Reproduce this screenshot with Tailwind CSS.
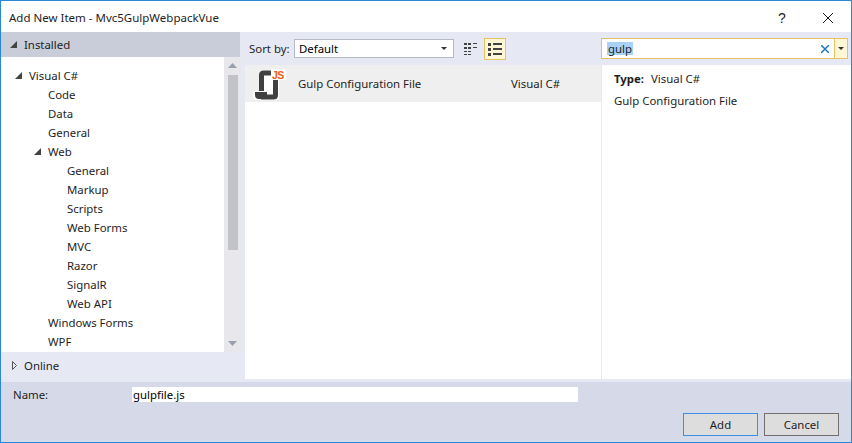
<!DOCTYPE html>
<html lang="en">
<head>
    <meta charset="UTF-8">
    <title>Add New Item</title>
    <script src="https://cdn.jsdelivr.net/npm/@tailwindcss/browser@4"></script>
</head>
<body class="bg-white">
    <div class="w-[852px] h-[443px] border border-[#2b87d8] flex flex-col overflow-hidden font-['Noto_Sans',sans-serif] text-[11.4px] text-[#1e1e1e] leading-[16px]">
        <!-- title bar -->
        <div class="h-[31px] shrink-0 bg-white flex items-center pl-[8px] pt-[2px]">
            <span class="flex-1 text-[11.5px]">Add New Item - Mvc5GulpWebpackVue</span>
            <span class="w-[10px] text-[14px] text-center mr-[36px] font-['Liberation_Sans',sans-serif]">?</span>
            <svg class="w-[10px] h-[10px] mr-[18px]" viewBox="0 0 10 10"><path d="M0 0L10 10M10 0L0 10" stroke="#1e1e1e" stroke-width="1" fill="none"/></svg>
        </div>

        <div class="flex-1 flex min-h-0 bg-[#e6e9f4]">
            <!-- left column -->
            <div class="w-[244px] shrink-0 flex flex-col">
                <div class="w-[239px] h-[25px] bg-[#c9cdd9] flex items-center shrink-0">
                    <svg class="w-[7px] h-[7px] ml-[9px] mr-[7px]" viewBox="0 0 7 7"><path d="M7 0V7H0Z" fill="#444"/></svg>
                    <span>Installed</span>
                </div>
                <div class="w-[240px] h-[295px] shrink-0 bg-white flex">
                    <div class="flex-1 pt-[9px]">
                        <div class="h-[19px] flex items-center pl-[14px]">
                            <svg class="w-[7px] h-[7px] mr-[7px]" viewBox="0 0 7 7"><path d="M7 0V7H0Z" fill="#444"/></svg>
                            <span>Visual C#</span>
                        </div>
                        <div class="h-[19px] flex items-center pl-[47px]">Code</div>
                        <div class="h-[19px] flex items-center pl-[47px]">Data</div>
                        <div class="h-[19px] flex items-center pl-[47px]">General</div>
                        <div class="h-[19px] flex items-center pl-[33px]">
                            <svg class="w-[7px] h-[7px] mr-[7px]" viewBox="0 0 7 7"><path d="M7 0V7H0Z" fill="#444"/></svg>
                            <span>Web</span>
                        </div>
                        <div class="h-[19px] flex items-center pl-[66px]">General</div>
                        <div class="h-[19px] flex items-center pl-[66px]">Markup</div>
                        <div class="h-[19px] flex items-center pl-[66px]">Scripts</div>
                        <div class="h-[19px] flex items-center pl-[66px]">Web Forms</div>
                        <div class="h-[19px] flex items-center pl-[66px]">MVC</div>
                        <div class="h-[19px] flex items-center pl-[66px]">Razor</div>
                        <div class="h-[19px] flex items-center pl-[66px]">SignalR</div>
                        <div class="h-[19px] flex items-center pl-[66px]">Web API</div>
                        <div class="h-[19px] flex items-center pl-[47px]">Windows Forms</div>
                        <div class="h-[19px] flex items-center pl-[47px]">WPF</div>
                    </div>
                    <!-- tree scrollbar -->
                    <div class="w-[17px] bg-[#e8e8ec] flex flex-col items-center">
                        <svg class="w-[9px] h-[5px] mt-[6px] mb-[7px]" viewBox="0 0 9 5"><path d="M4.500 0L9 5H0Z" fill="#9a9fae"/></svg>
                        <div class="w-[10px] h-[175px] bg-[#c2c3c9]"></div>
                        <div class="flex-1"></div>
                        <svg class="w-[9px] h-[5px] mb-[6px]" viewBox="0 0 9 5"><path d="M4.500 5L9 0H0Z" fill="#9a9fae"/></svg>
                    </div>
                </div>
                <div class="flex-1 flex items-center">
                    <svg class="w-[5px] h-[9px] ml-[11px] mr-[7px]" viewBox="0 0 5 9"><path d="M.5 .5L4.500 4.500L.5 8.500Z" fill="#e6e9f4" stroke="#555"/></svg>
                    <span>Online</span>
                </div>
            </div>

            <!-- center column -->
            <div class="w-[356px] shrink-0 flex flex-col">
                <div class="h-[33px] shrink-0 flex items-center pl-[4px]">
                    <span class="w-[45px]">Sort by:</span>
                    <div class="w-[160px] h-[19px] bg-white border border-[#b4bac8] flex items-center pl-[4px] text-black">
                        <span class="flex-1">Default</span>
                        <svg class="w-[6px] h-[3px] mr-[6px]" viewBox="0 0 6 3"><path d="M0 0H6L3 3Z" fill="#333"/></svg>
                    </div>
                    <svg class="w-[14px] h-[14px] ml-[9px]" viewBox="0 0 14 14"><path d="M1 1h3v2H1zM5 1h3v2H5zM10 1h4v1h-4zM1 5h3v2H1zM5 5h3v2H5zM10 5h4v1h-4zM1 9h3v1H1zM5 9h3v1H5zM1 12h3v1H1zM5 12h3v1H5z" fill="#424242"/></svg>
                    <div class="w-[22px] h-[22px] ml-[7px] bg-[#fef6d5] border border-[#e5c365] flex items-center justify-center">
                        <svg class="w-[14px] h-[14px]" viewBox="0 0 14 14"><path d="M0 1h3v3H0zM5 1h9v2H5zM0 6h3v3H0zM5 6h9v2H5zM0 11h3v3H0zM5 11h9v2H5z" fill="#424242"/></svg>
                    </div>
                </div>
                <div class="flex-1 bg-white">
                    <div class="h-[37px] bg-[#efefef] flex items-center">
                        <svg class="w-[34px] h-[34px] ml-[8px] mr-[11px]" viewBox="0 0 34 34">
                            <path d="M6 24V6Q6 3 9 3H28V13H26V33H4Q0 33 0 28V24Z" fill="#fff"/>
                            <path d="M8.500 24V8Q8.500 6 10.500 6H19" fill="none" stroke="#404040" stroke-width="5"/>
                            <path d="M22.500 12V28Q22.500 30 20.500 30H8" fill="none" stroke="#404040" stroke-width="5"/>
                            <path d="M2 25H14V32H6Q2 32 2 28Z" fill="#404040"/>
                            <rect x="18" y="2" width="15" height="11" fill="#fff"/>
                            <text x="19" y="11.500" font-size="10.500" font-weight="700" letter-spacing="-0.5" fill="#ec5a1e" font-family="Liberation Sans">JS</text>
                        </svg>
                        <span class="w-[213px]">Gulp Configuration File</span>
                        <span>Visual C#</span>
                    </div>
                </div>
            </div>

            <!-- right column -->
            <div class="flex-1 flex flex-col">
                <div class="h-[33px] shrink-0 flex items-center">
                    <div class="w-[234px] h-[21px] bg-white border border-[#e5c365] flex items-center pl-[5px]">
                        <span class="bg-[#a8d1f5] px-[1px] leading-[13px]">gulp</span>
                        <span class="flex-1"></span>
                        <svg class="w-[8px] h-[8px] mr-[5px]" viewBox="0 0 8 8"><path d="M0 0L8 8M8 0L0 8" stroke="#1b76c4" stroke-width="1.500" fill="none"/></svg>
                    </div>
                    <div class="w-[13px] h-[21px] bg-[#fef6d5] border border-l-0 border-[#e5c365] flex items-center justify-center">
                        <svg class="w-[6px] h-[3px]" viewBox="0 0 6 3"><path d="M0 0H6L3 3Z" fill="#333"/></svg>
                    </div>
                </div>
                <div class="flex-1 bg-white border-l border-[#e6e9f4] pl-[12px] pt-[3px]">
                    <div class="h-[22px] flex items-center"><span class="font-bold w-[37px]">Type:</span><span>Visual C#</span></div>
                    <div class="h-[22px] flex items-center">Gulp Configuration File</div>
                </div>
            </div>
        </div>

        <div class="h-[3px] shrink-0 bg-[#e6e9f4]"></div>

        <!-- footer -->
        <div class="h-[60px] shrink-0 bg-[#d6dae8]">
            <div class="flex items-center h-[15px] mt-[5px] pl-[12px]">
                <span class="w-[119px]">Name:</span>
                <div class="w-[446px] h-[15px] bg-white pl-[1px] text-black leading-[15px]">gulpfile.js</div>
            </div>
            <div class="flex justify-end gap-[6px] pr-[12px] mt-[11px]">
                <button class="w-[75px] h-[23px] bg-[#dddddd] border border-[#3d8fe3] text-center">Add</button>
                <button class="w-[75px] h-[23px] bg-[#dddddd] border border-[#707070] text-center">Cancel</button>
            </div>
        </div>
    </div>
</body>
</html>
